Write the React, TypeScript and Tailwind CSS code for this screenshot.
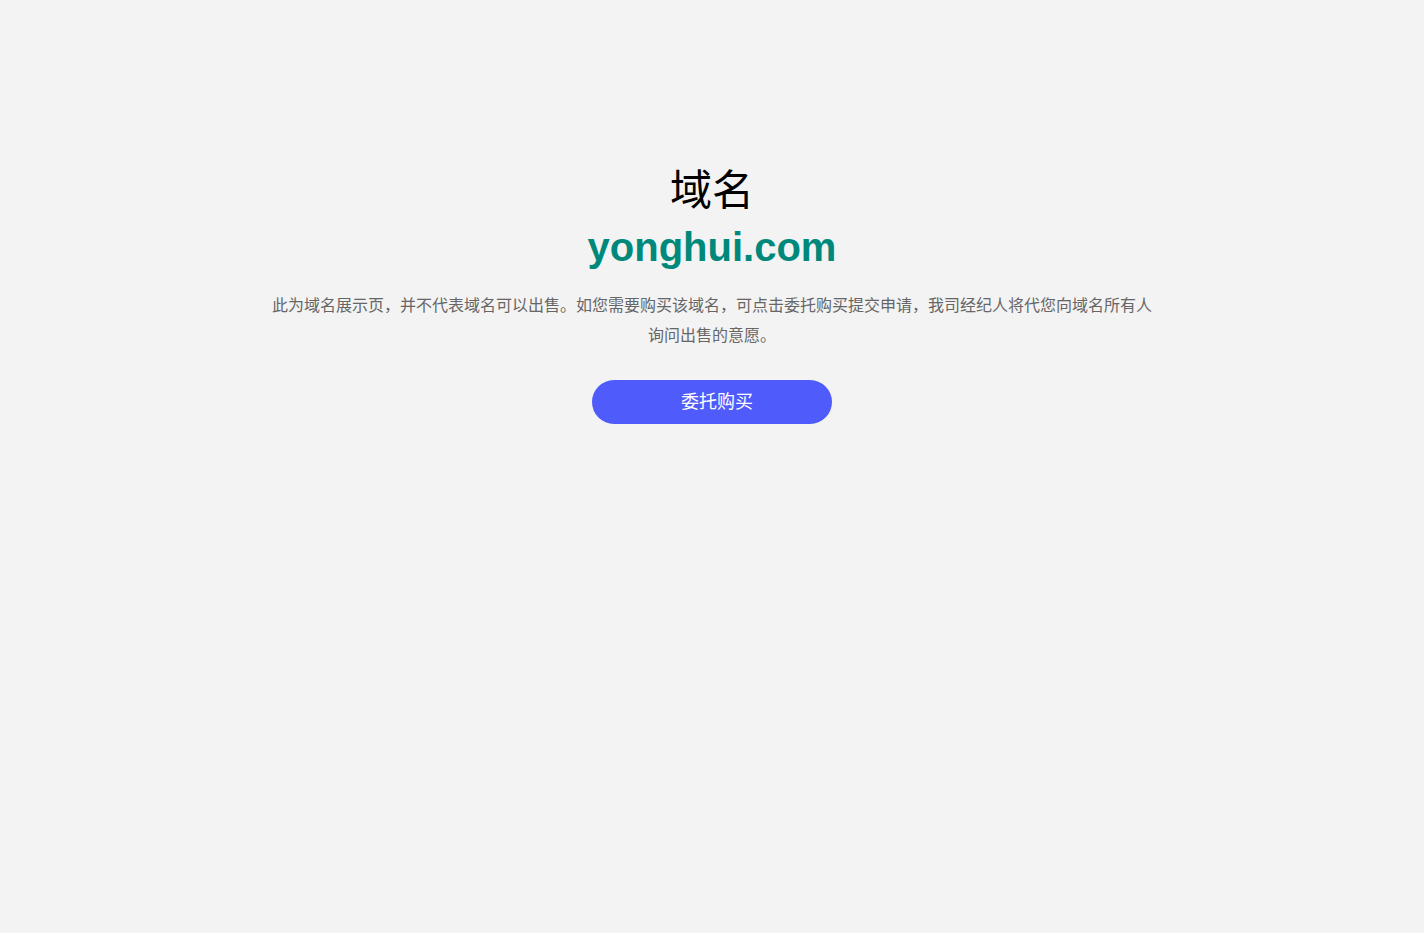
export default function App() {
  return (
    <div
      className="min-h-screen bg-[#f3f3f3] flex flex-col items-center pt-[165px]"
      style={{ fontFamily: '"Liberation Sans", "Noto Sans CJK SC", sans-serif' }}
    >
      <h1 className="text-[42px] leading-[52px] text-black">域名</h1>
      <div className="mt-[4px] text-[40px] leading-[52px] font-bold text-[#00897b]">yonghui.com</div>
      <p className="mt-[18px] w-[886px] text-center text-[16px] leading-[30px] text-[#666666]">
        此为域名展示页，并不代表域名可以出售。如您需要购买该域名，可点击委托购买提交申请，我司经纪人将代您向域名所有人询问出售的意愿。
      </p>
      <button className="mt-[29px] w-[240px] h-[44px] rounded-full bg-[#4f5bfa] text-white text-[18px] pl-[10px] pt-[1px]">
        委托购买
      </button>
    </div>
  );
}
